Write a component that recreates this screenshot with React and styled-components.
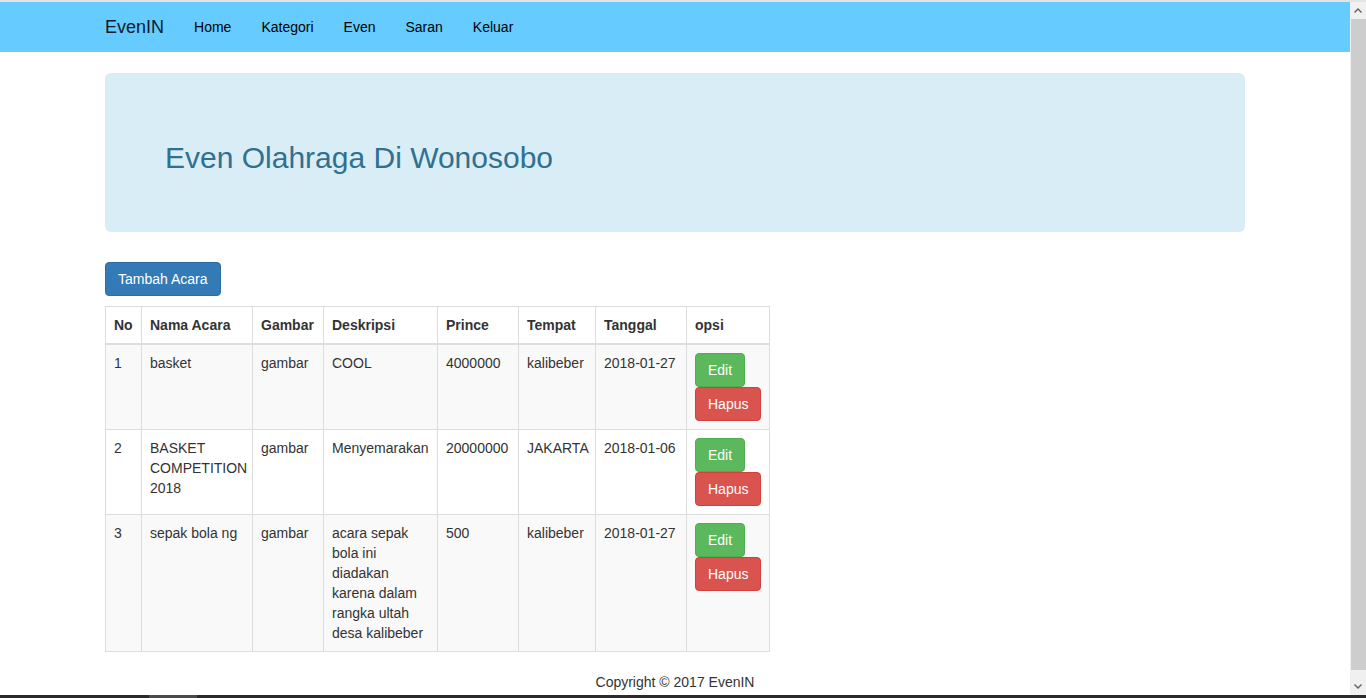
import styled, { createGlobalStyle } from "styled-components";

const GlobalStyle = createGlobalStyle`
  html, body {
    margin: 0;
    padding: 0;
    overflow: hidden;
    background: #fff;
  }
  body {
    font-family: "Liberation Sans", Arial, sans-serif;
    font-size: 14px;
    line-height: 1.42857;
    color: #333;
  }
  * {
    box-sizing: border-box;
  }
`;

const Screen = styled.div`
  width: 1366px;
  height: 698px;
  display: flex;
  flex-direction: column;
`;

const TopLine = styled.div`
  height: 2px;
  background: #e4e4e4;
`;

const Viewport = styled.div`
  flex: 1;
  display: flex;
  min-height: 0;
`;

const Page = styled.div`
  width: 1350px;
  overflow: hidden;
`;

const Scrollbar = styled.div`
  width: 16px;
  background: #f0f0f0;
  display: flex;
  flex-direction: column;
  align-items: center;
`;

const Arrow = styled.div`
  height: 17px;
  display: flex;
  align-items: center;
  justify-content: center;
  color: #606060;
`;

const Thumb = styled.div`
  flex: 1;
  width: 15px;
  margin-left: 1px;
  background: #cdcdcd;
  margin-bottom: 8px;
`;

const Taskbar = styled.div`
  height: 3px;
  background: #2b2b2b;
  display: flex;
`;

const TaskItem = styled.div`
  margin-left: 149px;
  width: 48px;
  background: #4a4a4a;
`;

const Navbar = styled.nav`
  height: 50px;
  background: #66ccff;
  margin-bottom: 21px;
`;

const Container = styled.div`
  width: 1170px;
  padding: 0 15px;
  margin: 0 auto;
`;

const NavInner = styled(Container)`
  display: flex;
  align-items: center;
  height: 50px;
`;

const Brand = styled.a`
  font-size: 18px;
  line-height: 20px;
  padding: 15px;
  margin-left: -15px;
  color: #0d1b2a;
  text-decoration: none;
`;

const NavLink = styled.a`
  font-size: 14px;
  line-height: 20px;
  padding: 15px;
  color: #000;
  text-decoration: none;
`;

const Jumbotron = styled.div`
  background: #d9edf7;
  border-radius: 6px;
  padding: 48px 60px;
  margin-bottom: 30px;
`;

const Title = styled.h2`
  margin: 20px 0 10px;
  font-size: 30px;
  font-weight: 500;
  line-height: 1.1;
  color: #31708f;
`;

const Button = styled.button`
  display: inline-block;
  font-family: inherit;
  font-size: 14px;
  line-height: 20px;
  padding: 6px 12px;
  border-radius: 4px;
  border: 1px solid ${(p) => p.$border};
  background: ${(p) => p.$bg};
  color: #fff;
  cursor: pointer;
  vertical-align: middle;
`;

const Table = styled.table`
  border-collapse: collapse;
  border-spacing: 0;
  table-layout: fixed;
  width: 664px;
  margin-top: 10px;
  margin-bottom: 20px;
  border: 1px solid #ddd;
`;

const Col = styled.col`
  width: ${(p) => p.$w}px;
`;

const Th = styled.th`
  text-align: left;
  font-weight: bold;
  padding: 8px;
  line-height: 20px;
  border: 1px solid #ddd;
  border-bottom: 2px solid #ddd;
  vertical-align: bottom;
`;

const Row = styled.tr`
  background: ${(p) => (p.$striped ? "#f9f9f9" : "#fff")};
`;

const Td = styled.td`
  padding: 8px;
  line-height: 20px;
  border: 1px solid #ddd;
  vertical-align: top;
`;

const Actions = styled.div`
  display: flex;
  flex-direction: column;
  align-items: flex-start;
`;

const Footer = styled.footer`
  text-align: center;
  line-height: 20px;
  color: #333;
`;

const cols = [36, 111, 71, 114, 81, 77, 91, 83];
const headers = ["No", "Nama Acara", "Gambar", "Deskripsi", "Prince", "Tempat", "Tanggal", "opsi"];

const rows = [
  { no: 1, nama: "basket", gambar: "gambar", desk: "COOL", harga: "4000000", tempat: "kalibeber", tgl: "2018-01-27" },
  { no: 2, nama: "BASKET COMPETITION 2018", gambar: "gambar", desk: "Menyemarakan", harga: "20000000", tempat: "JAKARTA", tgl: "2018-01-06" },
  {
    no: 3,
    nama: "sepak bola ng",
    gambar: "gambar",
    desk: "acara sepak bola ini diadakan karena dalam rangka ultah desa kalibeber",
    harga: "500",
    tempat: "kalibeber",
    tgl: "2018-01-27",
  },
];

const App = () => {
  return (
    <>
      <GlobalStyle />
      <Screen>
        <TopLine />
        <Viewport>
          <Page>
            <Navbar>
              <NavInner>
                <Brand href="#">EvenIN</Brand>
                <NavLink href="#">Home</NavLink>
                <NavLink href="#">Kategori</NavLink>
                <NavLink href="#">Even</NavLink>
                <NavLink href="#">Saran</NavLink>
                <NavLink href="#">Keluar</NavLink>
              </NavInner>
            </Navbar>

            <Container>
              <Jumbotron>
                <Title>Even Olahraga Di Wonosobo</Title>
              </Jumbotron>

              <Button $bg="#337ab7" $border="#2e6da4">
                Tambah Acara
              </Button>

              <Table>
                <colgroup>
                  {cols.map((w, i) => (
                    <Col key={i} $w={w} />
                  ))}
                </colgroup>
                <thead>
                  <tr>
                    {headers.map((h) => (
                      <Th key={h}>{h}</Th>
                    ))}
                  </tr>
                </thead>
                <tbody>
                  {rows.map((r, i) => (
                    <Row key={r.no} $striped={i % 2 === 0}>
                      <Td>{r.no}</Td>
                      <Td>{r.nama}</Td>
                      <Td>{r.gambar}</Td>
                      <Td>{r.desk}</Td>
                      <Td>{r.harga}</Td>
                      <Td>{r.tempat}</Td>
                      <Td>{r.tgl}</Td>
                      <Td>
                        <Actions>
                          <Button $bg="#5cb85c" $border="#4cae4c">
                            Edit
                          </Button>
                          <Button $bg="#d9534f" $border="#d43f3a">
                            Hapus
                          </Button>
                        </Actions>
                      </Td>
                    </Row>
                  ))}
                </tbody>
              </Table>
            </Container>

            <Footer>Copyright © 2017 EvenIN</Footer>
          </Page>
          <Scrollbar>
            <Arrow>
              <svg width="8" height="5" viewBox="0 0 8 5">
                <path d="M0.5 4.5 L4 1 L7.5 4.5" fill="none" stroke="#606060" strokeWidth="1.4" />
              </svg>
            </Arrow>
            <Thumb />
            <Arrow>
              <svg width="8" height="5" viewBox="0 0 8 5">
                <path d="M0.5 0.5 L4 4 L7.5 0.5" fill="none" stroke="#606060" strokeWidth="1.4" />
              </svg>
            </Arrow>
          </Scrollbar>
        </Viewport>
        <Taskbar>
          <TaskItem />
        </Taskbar>
      </Screen>
    </>
  );
};

export default App;
